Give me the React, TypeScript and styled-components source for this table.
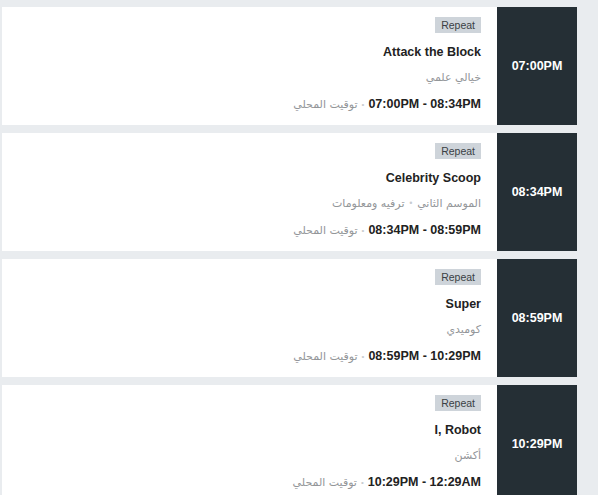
import React from 'react';
import styled, { createGlobalStyle } from 'styled-components';

const GlobalStyle = createGlobalStyle`
  body {
    margin: 0;
    background: #e9ecef;
    font-family: "Liberation Sans", Arial, sans-serif;
  }
`;

const List = styled.div`
  display: flex;
  flex-direction: column;
  gap: 8px;
  padding: 7px 21px 0 2px;
  direction: rtl;
`;

const Row = styled.div`
  display: flex;
  height: 118px;
`;

const TimeBox = styled.div`
  width: 80px;
  flex-shrink: 0;
  background: #252f35;
  color: #fff;
  font-weight: 700;
  font-size: 12.5px;
  display: flex;
  align-items: center;
  justify-content: center;
  direction: ltr;
`;

const Card = styled.div`
  flex: 1;
  background: #fff;
  padding: 10px 16px 0 16px;
  display: flex;
  flex-direction: column;
  align-items: flex-start;
`;

const Tag = styled.span`
  background: #ced4da;
  color: #3a3f44;
  font-size: 10.5px;
  height: 16px;
  line-height: 16px;
  padding: 0 6px;
  direction: ltr;
`;

const Title = styled.div`
  margin-top: 12px;
  font-size: 12.5px;
  font-weight: 700;
  color: #222;
  direction: ltr;
`;

const Meta = styled.div`
  margin-top: 12px;
  display: flex;
  align-items: center;
  gap: 4px;
  font-family: "DejaVu Sans", sans-serif;
  font-size: 11px;
  color: #939699;
`;

const Dot = styled.span`
  color: #c8ccd0;
  font-size: 8px;
`;

const Schedule = styled.div`
  margin-top: 13px;
  display: flex;
  align-items: center;
  gap: 4px;
`;

const Range = styled.span`
  font-size: 12.5px;
  font-weight: 700;
  color: #222;
  direction: ltr;
`;

const Local = styled.span`
  font-family: "DejaVu Sans", sans-serif;
  font-size: 11px;
  color: #939699;
`;

type Show = {
  start: string;
  end: string;
  title: string;
  meta: string[];
};

const shows: Show[] = [
  { start: '07:00PM', end: '08:34PM', title: 'Attack the Block', meta: ['خيالي علمي'] },
  { start: '08:34PM', end: '08:59PM', title: 'Celebrity Scoop', meta: ['الموسم الثاني', 'ترفيه ومعلومات'] },
  { start: '08:59PM', end: '10:29PM', title: 'Super', meta: ['كوميدي'] },
  { start: '10:29PM', end: '12:29AM', title: 'I, Robot', meta: ['أكشن'] },
];

const App = () => {
  return <>
    <GlobalStyle />
    <List>
      {shows.map(show => (
        <Row key={show.start}>
          <TimeBox>{show.start}</TimeBox>
          <Card>
            <Tag>Repeat</Tag>
            <Title>{show.title}</Title>
            <Meta>
              {show.meta.map((m, i) => (
                <React.Fragment key={m}>
                  {i > 0 && <Dot>•</Dot>}
                  <span>{m}</span>
                </React.Fragment>
              ))}
            </Meta>
            <Schedule>
              <Range>{show.start} - {show.end}</Range>
              <Dot>•</Dot>
              <Local>توقيت المحلي</Local>
            </Schedule>
          </Card>
        </Row>
      ))}
    </List>
  </>
}

export default App;
